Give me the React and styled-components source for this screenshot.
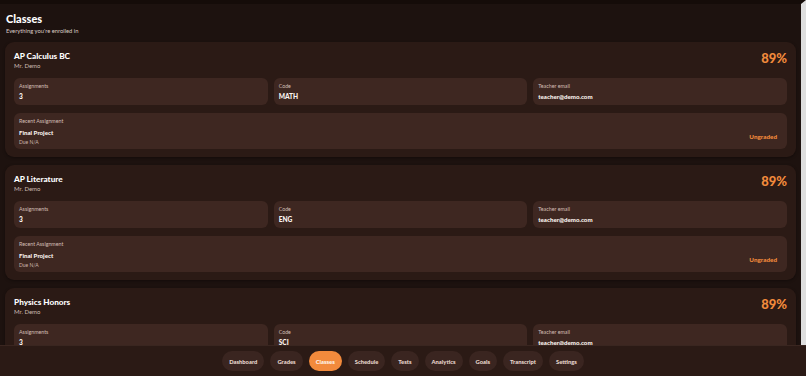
import React from "react";
import styled, { createGlobalStyle } from "styled-components";

const Global = createGlobalStyle`
  html, body { margin: 0; padding: 0; height: 100%; }
  body { background: #1d120f; font-family: Lato, "Open Sans", sans-serif; color: #f4ece8; }
  * { box-sizing: border-box; }
`;

const Shell = styled.div`
  height: 100vh;
  display: flex;
  flex-direction: column;
`;

const Main = styled.main`
  flex: 1;
  min-height: 0;
  overflow-y: scroll;
  scrollbar-width: none;
  border-top: 4px solid #150c09;
  border-right: 5px solid #dedede;
  padding: 0 5px 0 5px;
  &::-webkit-scrollbar { display: none; }
`;

const Header = styled.header`
  padding: 8px 1px 7px;
`;

const Title = styled.h1`
  margin: 0;
  font-size: 11px;
  font-weight: 900;
  line-height: 13px;
  color: #ffffff;
`;

const Subtitle = styled.p`
  margin: 2px 0 0;
  font-size: 5.8px;
  line-height: 8px;
  color: #dccbc3;
`;

const List = styled.div`
  display: flex;
  flex-direction: column;
  gap: 8px;
  padding-bottom: 10px;
`;

const Card = styled.section`
  background: #2b1a15;
  border-radius: 9px;
  padding: 9px 9px 8px;
  box-shadow: 0 1px 3px rgba(0,0,0,0.35);
`;

const CardHead = styled.div`
  display: flex;
  justify-content: space-between;
  align-items: flex-start;
  margin-bottom: 8px;
`;

const CardTitle = styled.h2`
  margin: 0;
  font-size: 8.2px;
  line-height: 11px;
  font-weight: 900;
  color: #ffffff;
`;

const Teacher = styled.div`
  font-size: 6px;
  line-height: 8px;
  color: #cdbab2;
`;

const Percent = styled.div`
  font-size: 13px;
  font-weight: 900;
  color: #f28a3c;
  line-height: 16px;
  margin-top: -1px;
`;

const StatGrid = styled.div`
  display: grid;
  grid-template-columns: repeat(3, 1fr);
  gap: 6px;
  margin-bottom: 8px;
`;

const Box = styled.div`
  background: #3e2721;
  border-radius: 6px;
  padding: ${p => (p.$tall ? "5px 5px" : "5px 5px 4px")};
  height: ${p => (p.$tall ? "36px" : "27px")};
  display: flex;
  align-items: center;
  justify-content: space-between;
`;

const BoxCol = styled.div`
  display: flex;
  flex-direction: column;
  align-self: stretch;
`;

const Label = styled.div`
  font-size: 5.3px;
  line-height: 7px;
  color: #d4bfb6;
`;

const Value = styled.div`
  font-size: ${p => (p.$small ? "6.1px" : "6.6px")};
  font-weight: 900;
  line-height: 9px;
  margin-top: ${p => (p.$mt ?? 2)}px;
  color: #fbf4f0;
`;

const Due = styled.div`
  font-size: 5px;
  line-height: 7px;
  color: #cdb8ae;
  margin-top: 2px;
`;

const Badge = styled.span`
  font-size: 6.3px;
  font-weight: 900;
  color: #f28a3c;
  margin-right: 5px;
  margin-top: 10px;
`;

const Nav = styled.nav`
  height: 31px;
  flex-shrink: 0;
  background: #2b1a15;
  border-top: 1px solid #3a2620;
  display: flex;
  justify-content: center;
  align-items: center;
  gap: 6px;
`;

const Pill = styled.button`
  border: none;
  height: 20px;
  padding: 0 7px;
  border-radius: 10px;
  font-family: inherit;
  font-size: 5.8px;
  font-weight: 900;
  background: ${p => (p.$active ? "#f28a3c" : "#3a2520")};
  color: ${p => (p.$active ? "#fff4ea" : "#e7d6cd")};
  cursor: pointer;
`;

const classes = [
  { name: "AP Calculus BC", code: "MATH" },
  { name: "AP Literature", code: "ENG" },
  { name: "Physics Honors", code: "SCI" },
  { name: "World History", code: "HIST" },
];

const tabs = ["Dashboard", "Grades", "Classes", "Schedule", "Tests", "Analytics", "Goals", "Transcript", "Settings"];

export default function App() {
  return (
    <>
      <Global />
      <Shell>
        <Main>
          <Header>
            <Title>Classes</Title>
            <Subtitle>Everything you're enrolled in</Subtitle>
          </Header>
          <List>
            {classes.map(c => (
              <Card key={c.name}>
                <CardHead>
                  <div>
                    <CardTitle>{c.name}</CardTitle>
                    <Teacher>Mr. Demo</Teacher>
                  </div>
                  <Percent>89%</Percent>
                </CardHead>
                <StatGrid>
                  <Box>
                    <BoxCol>
                      <Label>Assignments</Label>
                      <Value>3</Value>
                    </BoxCol>
                  </Box>
                  <Box>
                    <BoxCol>
                      <Label>Code</Label>
                      <Value>{c.code}</Value>
                    </BoxCol>
                  </Box>
                  <Box>
                    <BoxCol>
                      <Label>Teacher email</Label>
                      <Value $small>teacher@demo.com</Value>
                    </BoxCol>
                  </Box>
                </StatGrid>
                <Box $tall>
                  <BoxCol>
                    <Label>Recent Assignment</Label>
                    <Value $small $mt={3}>Final Project</Value>
                    <Due>Due N/A</Due>
                  </BoxCol>
                  <Badge>Ungraded</Badge>
                </Box>
              </Card>
            ))}
          </List>
        </Main>
        <Nav>
          {tabs.map(t => (
            <Pill key={t} $active={t === "Classes"}>{t}</Pill>
          ))}
        </Nav>
      </Shell>
    </>
  );
}
